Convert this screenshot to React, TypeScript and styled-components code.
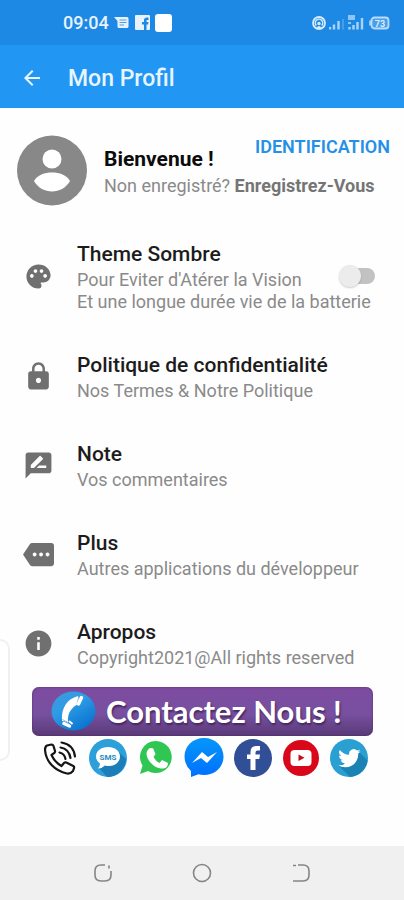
import React, { useState } from "react";
import styled, { createGlobalStyle } from "styled-components";
import { MdArrowBack, MdInfo, MdLock, MdMore, MdPalette, MdRateReview } from "react-icons/md";

const GlobalStyle = createGlobalStyle`
  *, *::before, *::after { box-sizing: border-box; }
  body { margin: 0; background: #fefefe; font-family: Roboto, "Liberation Sans", sans-serif; }
  h1, h2, p { margin: 0; }
  button { border: 0; padding: 0; background: none; font: inherit; color: inherit; cursor: pointer; }
  svg { display: block; }
`;

const Screen = styled.div`
  position: relative;
  display: flex;
  flex-direction: column;
  min-height: 100vh;
  background: #fefefe;
`;

const StatusBar = styled.div`
  display: flex;
  align-items: center;
  justify-content: space-between;
  height: 45px;
  padding: 0 14px 0 63px;
  background: #1e88e5;
  color: #e6f3fe;
`;

const StatusGroup = styled.div<{ $gap: number }>`
  display: flex;
  align-items: center;
  gap: ${(p) => p.$gap}px;
`;

const Clock = styled.span`
  font-size: 18px;
  line-height: 24px;
  font-weight: 500;
`;

const AppBar = styled.header`
  display: flex;
  align-items: center;
  gap: 24px;
  height: 63px;
  padding: 2px 20px 0;
  background: #2196f3;
  color: #e8f5ff;
`;

const AppTitle = styled.h1`
  padding-top: 2px;
  font-size: 23px;
  line-height: 28px;
  font-weight: 500;
`;

const Profile = styled.section`
  display: flex;
  gap: 17px;
  padding: 27px 14px 0 17px;
`;

const ProfileText = styled.div`
  flex: 1;
  min-width: 0;
`;

const ProfileTop = styled.div`
  display: flex;
  justify-content: space-between;
  height: 37px;
`;

const Welcome = styled.h2`
  align-self: flex-end;
  font-size: 21px;
  line-height: 26px;
  font-weight: 700;
  color: #0c0c0c;
`;

const LoginButton = styled.button`
  align-self: flex-start;
  font-size: 18px;
  line-height: 24px;
  font-weight: 600;
  color: #2590e6;
`;

const RegisterLine = styled.p`
  font-size: 18px;
  line-height: 28px;
  color: #8a8a8a;
  white-space: nowrap;
`;

const RegisterLink = styled.a`
  font-weight: 700;
  color: #757575;
  text-decoration: none;
`;

const Settings = styled.ul`
  display: flex;
  flex-direction: column;
  gap: 37px;
  margin: 0;
  padding: 33px 29px 0 23px;
  list-style: none;
`;

const SettingItem = styled.li`
  display: flex;
  align-items: center;
  position: relative;
`;

const SettingBody = styled.button`
  display: flex;
  align-items: center;
  flex: 1;
  gap: 23px;
  text-align: left;
`;

const SettingLabel = styled.label`
  display: flex;
  align-items: center;
  flex: 1;
  gap: 23px;
  cursor: pointer;
`;

const SettingIcon = styled.span`
  display: flex;
  justify-content: center;
  flex: 0 0 31px;
  color: #707070;
`;

const SettingText = styled.span`
  display: flex;
  flex-direction: column;
  white-space: nowrap;
`;

const SettingTitle = styled.span`
  font-size: 21px;
  line-height: 30px;
  font-weight: 500;
  color: #1c1c1c;
`;

const SettingHint = styled.span`
  font-size: 18px;
  line-height: 22px;
  color: #8a8a8a;
`;

const Toggle = styled.input`
  appearance: none;
  position: absolute;
  right: 0;
  width: 36px;
  height: 24px;
  margin: 0;
  cursor: pointer;

  &::before {
    content: "";
    position: absolute;
    inset: 4px 0 4px 4px;
    border-radius: 8px;
    background: #c2c2c2;
  }
  &::after {
    content: "";
    position: absolute;
    left: 0;
    top: 1px;
    width: 22px;
    height: 22px;
    border-radius: 50%;
    background: #ececec;
    box-shadow: 0 1px 2px rgba(0, 0, 0, 0.2);
  }
  &:checked::before { background: #90caf9; }
  &:checked::after { left: 14px; background: #2196f3; }
`;

const Contact = styled.section`
  padding: 18px 31px 0 32px;
`;

const ContactBanner = styled.button`
  display: flex;
  align-items: center;
  gap: 10px;
  width: 100%;
  height: 49px;
  padding: 0 19px 2px;
  border-radius: 7px;
  background: linear-gradient(#7d4ba0, #7850a0 55%, #593977);
  box-shadow: inset 0 0 2px #48295f;
  color: #fff;
  font-family: Lato, "Open Sans", sans-serif;
  font-size: 31px;
  line-height: 40px;
  font-weight: 700;
  text-shadow: 1px 2px 2px #45265e;
  white-space: nowrap;
`;

const SocialRow = styled.nav`
  display: grid;
  grid-template-columns: repeat(7, 1fr);
  align-items: center;
  justify-items: center;
  padding: 2px 0 0 4px;
`;

const SocialLink = styled.a`
  display: block;
`;

const SystemNav = styled.nav`
  display: flex;
  align-items: center;
  justify-content: space-around;
  height: 54px;
  margin-top: auto;
  padding: 0 54px;
  background: #f0f0f0;
`;

const EdgePanel = styled.div`
  position: absolute;
  left: 0;
  top: 639px;
  width: 10px;
  height: 122px;
  border: 2px solid #f0f0f0;
  border-left: 0;
  border-radius: 0 10px 10px 0;
  background: #fff;
`;

const MessagesGlyph = () => (
  <svg width="16" height="14" viewBox="0 0 16 14" aria-hidden="true">
    <path d="M0 1h13q1.500 0 1.500 1.500v8q0 1.500-1.500 1.500H5q-1.500 0-1.500-1.500V5z" fill="#e6f3fe" />
    <path d="M5.500 4h7M5.500 6.500h7M5.500 9h4.500" stroke="#4d9fe6" strokeWidth="1" />
  </svg>
);

const FacebookGlyph = () => (
  <svg width="15" height="15" viewBox="0 0 15 15" aria-hidden="true">
    <rect width="15" height="15" rx="1" fill="#e6f3fe" />
    <path d="M9 15V9.500H7V7h2V5.300Q9 2.500 12 2.500h1.500V5h-1.300q-.7 0-.7.8V7h2l-.4 2.500h-1.600V15z" fill="#1e88e5" />
  </svg>
);

const HotspotGlyph = () => (
  <svg width="14" height="14" viewBox="0 0 14 14" fill="none" aria-hidden="true">
    <circle cx="7" cy="7" r="6" stroke="#d8ecfd" strokeWidth="1.800" />
    <path d="M4.300 9.500a3.700 3.700 0 1 1 5.400 0" stroke="#d8ecfd" strokeWidth="1.500" />
    <circle cx="7" cy="7.500" r="1.700" fill="#d8ecfd" />
    <path d="M4.500 12q2.500-4 5 0z" fill="#d8ecfd" />
  </svg>
);

const SignalGlyphs = () => (
  <svg width="36" height="16" viewBox="0 0 36 16" aria-hidden="true">
    <path d="M1 14.500v-2.500M5 14.500v-5M9.500 14.500V6M20.500 14.500v-2.500M24.500 14.500v-4.500M28.500 14.500V7M33 14.500V3" stroke="#a9d3f8" strokeWidth="2.400" />
    <path d="M14 14.500V4" stroke="#469eea" strokeWidth="2" />
    <path d="M19 0h7v5h-7zM19 7h3v2h-3z" fill="#8fc5f6" />
  </svg>
);

const BatteryGlyph = () => (
  <svg width="22" height="14" viewBox="0 0 22 14" aria-hidden="true">
    <path d="M3.500 4.500H1.200v5h2.300" fill="#a8d3f8" />
    <rect x="3.500" y="1.500" width="17" height="11" rx="3" fill="#4a9eea" stroke="#b9dcfa" strokeWidth="1.800" />
    <text x="12" y="10.500" textAnchor="middle" fontSize="9" fontWeight="700" fontFamily="Roboto, sans-serif" fill="#d8ecfd">73</text>
  </svg>
);

const Avatar = () => (
  <svg width="70" height="71" viewBox="0 0 70 71" aria-hidden="true">
    <circle cx="35" cy="35.500" r="35" fill="#888" />
    <circle cx="35" cy="24" r="9.500" fill="#fff" />
    <path d="M17 46C20 40 28 37.500 35 37.500S50 40 53 46C49 53 42 56.500 35 56.500S21 53 17 46z" fill="#fff" />
  </svg>
);

const BannerPhone = () => (
  <svg width="45" height="40" viewBox="0 0 45 40" aria-hidden="true">
    <defs>
      <linearGradient id="orb" x1="0" y1="0" x2="0.700" y2="1">
        <stop offset="0" stopColor="#3f9bd9" />
        <stop offset="0.450" stopColor="#2e9be6" />
        <stop offset="1" stopColor="#0873cf" />
      </linearGradient>
    </defs>
    <ellipse cx="22.500" cy="20" rx="22" ry="19.500" fill="url(#orb)" />
    <path d="M27 5C16 8 10 17 11 30l6 1c0-5 0-8 3-12s5-5 8-6z" fill="#fff" />
    <path d="M28 5.500l-2 7M11.500 28.500l6 3.500" stroke="#9db5c6" strokeWidth="1" />
    <path d="M30.500 6.500l-3 6.500M13 32.500l5.500 2.500" stroke="#fff" strokeWidth="3.500" strokeLinecap="round" />
    <path d="M18.500 30.500l2.500 2" stroke="#fff" strokeWidth="2" strokeLinecap="round" />
  </svg>
);

const CallIcon = () => (
  <svg width="34" height="36" viewBox="0 0 34 36" fill="none" stroke="#151515" strokeWidth="2.200" strokeLinecap="round" strokeLinejoin="round" aria-hidden="true">
    <path d="M4 5.500l4.500-1q1.500 0 2 1.500l1.500 5q.3 1.500-1 2.200L8.500 15q3 7 10 11l2.500-3q1-1 2.300-.5l7 3.500q1.200.8.700 2.200L30 31q-2.500 3-6 2.500C12 31 3 22 2 10q0-3.500 2-4.500z" />
    <path d="M16.500 12.500q5 1 6 6.500M17.500 7.500q8.500 1.500 10 10.500M18.500 2.500q12 2 13.500 14" />
  </svg>
);

const SmsIcon = () => (
  <svg width="38" height="38" viewBox="0 0 38 38" aria-hidden="true">
    <circle cx="19" cy="19" r="19" fill="#2d9fd9" />
    <path d="M29 12l8 8a19 19 0 0 1-19 18l-7-8z" fill="#1b7eb9" />
    <path d="M19 8c7 0 12 4 12 9.500S26 27 20 27q-2 0-4-.5-3 3-7 3 2-2 2-5-4-3-4-7C7 12 12 8 19 8z" fill="#fff" />
    <text x="19" y="21" textAnchor="middle" fontFamily="Roboto, sans-serif" fontSize="8" fontWeight="700" fill="#268cbd">SMS</text>
  </svg>
);

const WhatsAppIcon = () => (
  <svg width="34" height="35" viewBox="0 0 34 35" aria-hidden="true">
    <path d="M17 1a16 16 0 1 1-8 30L1 34l2.500-8.500A16 16 0 0 1 17 1z" fill="#2fc653" />
    <path d="M11 8l3 .2 2.500 5.800-2 3q2 4 6 6l2.500-3 6 3q0 5-5 5.500C16 29 8 21 7.500 14q0-4 3.500-6z" fill="#fff" />
  </svg>
);

const MessengerIcon = () => (
  <svg width="40" height="39" viewBox="0 0 40 39" aria-hidden="true">
    <defs>
      <linearGradient id="messenger" x1="0" y1="1" x2="0" y2="0">
        <stop offset="0" stopColor="#0070ff" />
        <stop offset="1" stopColor="#0696fa" />
      </linearGradient>
    </defs>
    <path d="M20 0c11 0 19.500 8 19.500 18.500S31 37 20 37q-3 0-5.500-.700L7 39v-6Q.5 27 .5 18.500C.5 8 9 0 20 0z" fill="url(#messenger)" />
    <path d="M8 25l10-11 6 5 9-5-10 11-6-5z" fill="#fff" />
  </svg>
);

const FacebookIcon = () => (
  <svg width="38" height="38" viewBox="0 0 38 38" aria-hidden="true">
    <circle cx="19" cy="19" r="19" fill="#314f96" />
    <path d="M16.500 31V20H13v-4.500h3.500V13q0-6 6-6H26v4.500h-2.500q-2 0-2 2v2H26L25.300 20h-3.800v11z" fill="#fff" />
  </svg>
);

const YoutubeIcon = () => (
  <svg width="36" height="36" viewBox="0 0 36 36" aria-hidden="true">
    <circle cx="18" cy="18" r="18" fill="#d8071a" />
    <rect x="7.500" y="10" width="21" height="16" rx="4" fill="#fff" />
    <path d="M15.500 14.500v6.500l6-3.200z" fill="#c80b1a" />
  </svg>
);

const TwitterIcon = () => (
  <svg width="38" height="38" viewBox="0 0 38 38" aria-hidden="true">
    <circle cx="19" cy="19" r="19" fill="#2a9fd2" />
    <path d="M29 13l8.500 8.500A19 19 0 0 1 20 38L9 27z" fill="#1b82b4" />
    <path
      d="M30.500 12.200q-1.200.5-2.600.7 1.500-.9 2-2.500-1.300.8-2.900 1.100a4.600 4.600 0 0 0-7.800 4.200q-5.600-.3-9.400-4.800-2 3.800 1.400 6.200-1 0-2.100-.6 0 3.600 3.700 4.600-1 .3-2.100.1 1.100 3 4.300 3.200-2.800 2.300-6.800 1.900 3.200 2 7.100 2c8.500 0 13.200-7 12.900-13.700q1.400-1 2.300-2.400z"
      fill="#fff"
    />
  </svg>
);

const RecentsGlyph = () => (
  <svg width="20" height="20" viewBox="0 0 20 20" fill="none" stroke="#858585" strokeWidth="1.600" aria-hidden="true">
    <path d="M12 2H8Q2 2 2 8v4q0 6 6 6h4q6 0 6-6V8M16 2.500v3" />
  </svg>
);

const HomeGlyph = () => (
  <svg width="20" height="20" viewBox="0 0 20 20" fill="none" stroke="#858585" strokeWidth="1.600" aria-hidden="true">
    <circle cx="10" cy="10" r="8.500" />
  </svg>
);

const BackGlyph = () => (
  <svg width="20" height="20" viewBox="0 0 20 20" fill="none" stroke="#858585" strokeWidth="1.600" aria-hidden="true">
    <path d="M7 2h5q6 0 6 6v4q0 6-6 6H2M2 2.500h3" />
  </svg>
);

const links = [
  { title: "Politique de confidentialité", hint: "Nos Termes & Notre Politique", icon: <MdLock size={31} /> },
  { title: "Note", hint: "Vos commentaires", icon: <MdRateReview size={31} /> },
  { title: "Plus", hint: "Autres applications du développeur", icon: <MdMore size={31} /> },
  { title: "Apropos", hint: "Copyright2021@All rights reserved", icon: <MdInfo size={31} /> },
];

const socials = [
  { name: "Téléphone", icon: <CallIcon /> },
  { name: "SMS", icon: <SmsIcon /> },
  { name: "WhatsApp", icon: <WhatsAppIcon /> },
  { name: "Messenger", icon: <MessengerIcon /> },
  { name: "Facebook", icon: <FacebookIcon /> },
  { name: "YouTube", icon: <YoutubeIcon /> },
  { name: "Twitter", icon: <TwitterIcon /> },
];

export default function App() {
  const [dark, setDark] = useState(false);

  return (
    <>
      <GlobalStyle />
      <Screen>
        <StatusBar>
          <StatusGroup $gap={5}>
            <Clock>09:04</Clock>
            <MessagesGlyph />
            <FacebookGlyph />
            <svg width="17" height="18" viewBox="0 0 17 18" aria-hidden="true">
              <rect width="17" height="18" rx="3" fill="#fff" />
            </svg>
          </StatusGroup>
          <StatusGroup $gap={3}>
            <HotspotGlyph />
            <SignalGlyphs />
            <BatteryGlyph />
          </StatusGroup>
        </StatusBar>
        <AppBar>
          <button aria-label="Retour">
            <MdArrowBack size={24} />
          </button>
          <AppTitle>Mon Profil</AppTitle>
        </AppBar>
        <main>
          <Profile>
            <Avatar />
            <ProfileText>
              <ProfileTop>
                <Welcome>Bienvenue !</Welcome>
                <LoginButton>IDENTIFICATION</LoginButton>
              </ProfileTop>
              <RegisterLine>
                Non enregistré? <RegisterLink href="#inscription">Enregistrez-Vous</RegisterLink>
              </RegisterLine>
            </ProfileText>
          </Profile>
          <Settings>
            <SettingItem>
              <SettingLabel htmlFor="theme">
                <SettingIcon>
                  <MdPalette size={29} />
                </SettingIcon>
                <SettingText>
                  <SettingTitle>Theme Sombre</SettingTitle>
                  <SettingHint>Pour Eviter d'Atérer la Vision</SettingHint>
                  <SettingHint>Et une longue durée vie de la batterie</SettingHint>
                </SettingText>
              </SettingLabel>
              <Toggle id="theme" type="checkbox" role="switch" checked={dark} onChange={(e) => setDark(e.target.checked)} />
            </SettingItem>
            {links.map((item) => (
              <SettingItem key={item.title}>
                <SettingBody>
                  <SettingIcon>{item.icon}</SettingIcon>
                  <SettingText>
                    <SettingTitle>{item.title}</SettingTitle>
                    <SettingHint>{item.hint}</SettingHint>
                  </SettingText>
                </SettingBody>
              </SettingItem>
            ))}
          </Settings>
          <Contact>
            <ContactBanner>
              <BannerPhone />
              Contactez Nous !
            </ContactBanner>
            <SocialRow>
              {socials.map((item) => (
                <SocialLink key={item.name} href={`#${item.name}`} aria-label={item.name}>
                  {item.icon}
                </SocialLink>
              ))}
            </SocialRow>
          </Contact>
        </main>
        <EdgePanel />
        <SystemNav>
          <button aria-label="Récents">
            <RecentsGlyph />
          </button>
          <button aria-label="Accueil">
            <HomeGlyph />
          </button>
          <button aria-label="Précédent">
            <BackGlyph />
          </button>
        </SystemNav>
      </Screen>
    </>
  );
}
